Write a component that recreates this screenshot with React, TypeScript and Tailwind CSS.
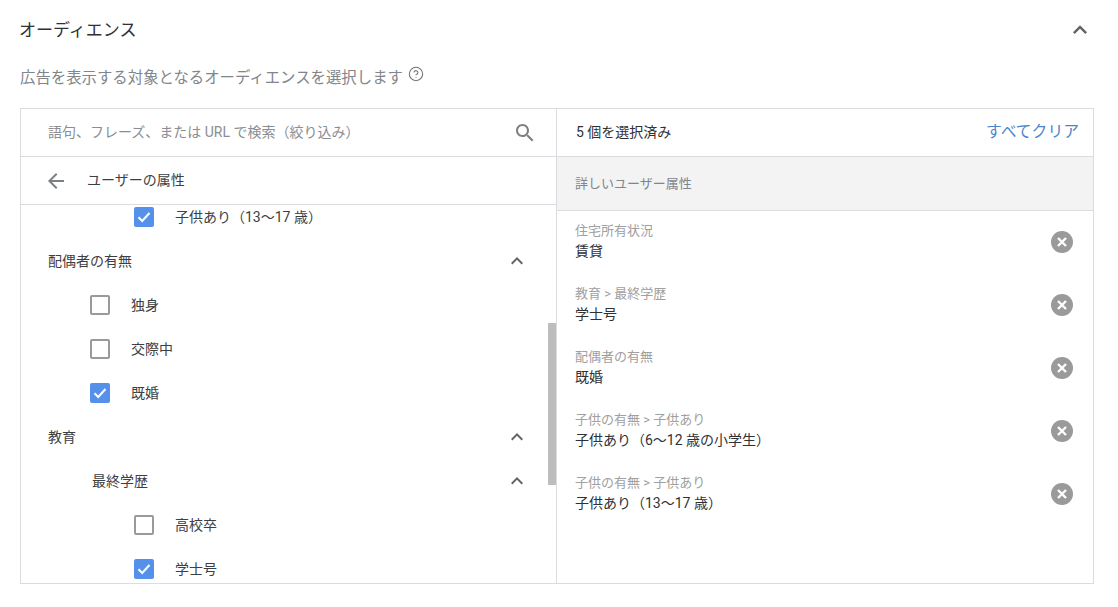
import React from 'react';
import { CircleHelp } from 'lucide-react';

const font = { fontFamily: 'Roboto, "Noto Sans CJK JP", "Liberation Sans", sans-serif' };

const Chevron = ({ size = 24 }: { size?: number }) => (
  <svg width={size} height={size} viewBox="0 0 24 24" fill="#5f6368">
    <path d="M7.41 15.41 12 10.83l4.59 4.58L18 14l-6-6-6 6z" />
  </svg>
);

const Box = ({ checked }: { checked: boolean }) =>
  checked ? (
    <div className="w-5 h-5 rounded-[2px] bg-[#5591ea] flex items-center justify-center shrink-0">
      <svg width="16" height="16" viewBox="0 0 16 16" fill="none">
        <path d="M2.5 8.2 6.2 12 13.5 4" stroke="#fff" strokeWidth="2" />
      </svg>
    </div>
  ) : (
    <div className="w-5 h-5 rounded-[2px] border-2 border-[#9a9a9a] bg-white shrink-0" />
  );

const Check = ({ label, checked, deep }: { label: string; checked: boolean; deep?: boolean }) => (
  <div className={`h-11 flex items-center ${deep ? 'pl-[113px]' : 'pl-[69px]'}`}>
    <Box checked={checked} />
    <span className="ml-[21px] text-[14px] text-[#3c4043]">{label}</span>
  </div>
);

const Group = ({ label, indent }: { label: string; indent?: boolean }) => (
  <div className={`h-11 flex items-center justify-between pr-[27px] ${indent ? 'pl-[71px]' : 'pl-[27px]'}`}>
    <span className="text-[14px] text-[#3c4043]">{label}</span>
    <Chevron />
  </div>
);

const Selected = ({ path, value }: { path: string; value: string }) => (
  <div className="h-[63px] flex items-center justify-between pl-[18px] pr-[20px]">
    <div className="leading-[20px] pb-px">
      <div className="text-[13px] text-[#a0a0a0]">{path}</div>
      <div className="text-[14px] text-[#303134]">{value}</div>
    </div>
    <div className="w-[22px] h-[22px] rounded-full bg-[#9a9a9a] flex items-center justify-center">
      <svg width="12" height="12" viewBox="0 0 12 12" fill="none">
        <path d="M2 2 10 10M10 2 2 10" stroke="#fff" strokeWidth="2.4" />
      </svg>
    </div>
  </div>
);

export default function App() {
  return (
    <div className="w-[1118px] h-[607px] bg-white px-5 overflow-hidden" style={font}>
      <div className="h-[60px] flex items-center justify-between pr-[4px]">
        <h2 className="-ml-px pt-[2px] text-[17px] font-normal text-[#303134]">オーディエンス</h2>
        <Chevron size={28} />
      </div>
      <div className="h-[48px] flex items-start pt-[7px]">
        <span className="text-[15.4px] text-[#80868b]">広告を表示する対象となるオーディエンスを選択します</span>
        <CircleHelp size={16} strokeWidth={1.6} className="text-[#70757a] ml-[5px] -mt-[1px]" />
      </div>
      <div className="w-[1074px] h-[476px] border border-[#dadce0] flex">
        <div className="w-[536px] border-r border-[#dadce0] flex flex-col relative">
          <div className="h-12 shrink-0 border-b border-[#dadce0] flex items-center justify-between pl-[27px] pr-[19px]">
            <span className="text-[14px] text-[#8a8d91]">語句、フレーズ、または URL で検索（絞り込み）</span>
            <svg width="24" height="24" viewBox="0 0 24 24" fill="#7d8083">
              <path d="M15.5 14h-.79l-.28-.27C15.41 12.59 16 11.11 16 9.5 16 5.91 13.09 3 9.5 3S3 5.91 3 9.5 5.91 16 9.5 16c1.61 0 3.09-.59 4.23-1.57l.27.28v.79l5 4.99L20.49 19l-4.99-5zm-6 0C7.01 14 5 11.99 5 9.5S7.01 5 9.5 5 14 7.01 14 9.5 11.99 14 9.5 14z" />
            </svg>
          </div>
          <div className="h-12 shrink-0 border-b border-[#dadce0] flex items-center pl-[23px]">
            <svg width="24" height="24" viewBox="0 0 24 24" fill="#7d8083">
              <path d="M20 11H7.83l5.59-5.59L12 4l-8 8 8 8 1.41-1.41L7.83 13H20v-2z" />
            </svg>
            <span className="ml-[19px] text-[14px] text-[#3c4043]">ユーザーの属性</span>
          </div>
          <div className="flex-1 overflow-hidden">
            <div className="-mt-[10px]">
              <Check label="子供あり（13〜17 歳）" checked deep />
              <Group label="配偶者の有無" />
              <Check label="独身" checked={false} />
              <Check label="交際中" checked={false} />
              <Check label="既婚" checked />
              <Group label="教育" />
              <Group label="最終学歴" indent />
              <Check label="高校卒" checked={false} deep />
              <Check label="学士号" checked deep />
            </div>
          </div>
          <div className="absolute right-0 top-[214px] w-2 h-[162px] bg-[#bdbdbd]" />
        </div>
        <div className="flex-1 flex flex-col">
          <div className="h-12 shrink-0 border-b border-[#dadce0] flex items-center justify-between pl-[19px] pr-[14px]">
            <span className="text-[14px] text-[#303134]">5 個を選択済み</span>
            <span className="pb-[2px] text-[15.8px] text-[#4a86c8]">すべてクリア</span>
          </div>
          <div className="h-[54px] shrink-0 border-b border-[#dadce0] bg-[#f3f3f3] flex items-center pl-[18px]">
            <span className="text-[13px] text-[#80868b]">詳しいユーザー属性</span>
          </div>
          <div className="-mt-px">
            <Selected path="住宅所有状況" value="賃貸" />
            <Selected path="教育 > 最終学歴" value="学士号" />
            <Selected path="配偶者の有無" value="既婚" />
            <Selected path="子供の有無 > 子供あり" value="子供あり（6〜12 歳の小学生）" />
            <Selected path="子供の有無 > 子供あり" value="子供あり（13〜17 歳）" />
          </div>
        </div>
      </div>
    </div>
  );
}
